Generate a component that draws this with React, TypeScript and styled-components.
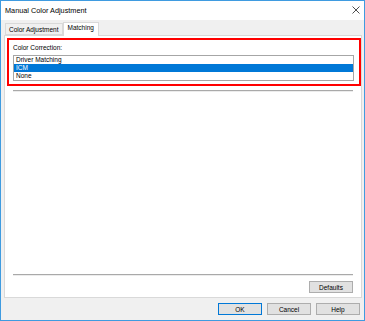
import styled, { createGlobalStyle } from "styled-components";

const GlobalStyle = createGlobalStyle`
  html, body {
    margin: 0;
    padding: 0;
    background: #ffffff;
  }
  * {
    box-sizing: border-box;
  }
`;

const Window = styled.div`
  width: 365px;
  height: 321px;
  border: 1px solid #3f9be0;
  background: #f0f0f0;
  display: flex;
  flex-direction: column;
  font-family: "Liberation Sans", Arial, sans-serif;
  font-size: 6.5px;
  color: #000;
`;

const TitleBar = styled.div`
  height: 19px;
  background: #ffffff;
  display: flex;
  align-items: center;
  justify-content: space-between;
  padding: 0 4px 1px 4px;
  font-size: 7.3px;
`;

const CloseIcon = () => (
  <svg width="8" height="8" viewBox="0 0 8 8">
    <path d="M0.5 0.5 L7.5 7.5 M7.5 0.5 L0.5 7.5" stroke="#3a3a3a" strokeWidth="0.9" fill="none" />
  </svg>
);

const Body = styled.div`
  flex: 1;
  display: flex;
  flex-direction: column;
  padding: 2px 2px 5px 3px;
`;

const TabStrip = styled.div`
  height: 13px;
  display: flex;
  align-items: flex-end;
  padding-left: 1px;
  position: relative;
  z-index: 1;
`;

const Tab = styled.div<{ $active?: boolean }>`
  height: ${(p) => (p.$active ? 14 : 12)}px;
  margin-bottom: ${(p) => (p.$active ? -1 : 0)}px;
  padding: ${(p) => (p.$active ? "1px 4px 0 4px" : "1px 3px 0 3px")};
  background: ${(p) => (p.$active ? "#ffffff" : "#f0f0f0")};
  border: 1px solid #d9d9d9;
  border-bottom: ${(p) => (p.$active ? "none" : "1px solid #d9d9d9")};
  display: flex;
  align-items: ${(p) => (p.$active ? "flex-start" : "center")};
  white-space: nowrap;
`;

const Panel = styled.div`
  flex: 1;
  background: #ffffff;
  border: 1px solid #d9d9d9;
  display: flex;
  flex-direction: column;
  padding: 1px 0 4px 2px;
`;

const Highlight = styled.div`
  margin-top: 1px;
  border: 2px solid #ff0000;
  padding: 3px 5px 3px 4px;
  display: flex;
  flex-direction: column;
`;

const Label = styled.div`
  height: 10px;
  line-height: 10px;
  margin-bottom: 2px;
`;

const ListBox = styled.div`
  height: 26px;
  border: 1px solid #a6a6a6;
  background: #ffffff;
  display: flex;
  flex-direction: column;
`;

const ListItem = styled.div<{ $selected?: boolean }>`
  height: 8px;
  line-height: 8px;
  padding-left: 2px;
  background: ${(p) => (p.$selected ? "#0078d7" : "transparent")};
  color: ${(p) => (p.$selected ? "#ffffff" : "#000000")};
`;

const Separator = styled.div<{ $top: number }>`
  margin: ${(p) => p.$top}px 8px 0 6px;
  height: 2px;
  border-top: 1px solid #a9a9a9;
  border-bottom: 1px solid #ececec;
`;

const Spacer = styled.div`
  flex: 1;
`;

const ButtonRow = styled.div<{ $top: number; $right: number }>`
  display: flex;
  justify-content: flex-end;
  gap: 5px;
  margin-top: ${(p) => p.$top}px;
  padding-right: ${(p) => p.$right}px;
`;

const Button = styled.div<{ $default?: boolean }>`
  width: 44px;
  height: 12px;
  background: #e1e1e1;
  border: 1px solid ${(p) => (p.$default ? "#0078d7" : "#adadad")};
  display: flex;
  align-items: center;
  justify-content: center;
`;

export default function App() {
  return (
    <>
      <GlobalStyle />
      <Window>
        <TitleBar>
          <span>Manual Color Adjustment</span>
          <CloseIcon />
        </TitleBar>
        <Body>
          <TabStrip>
            <Tab>Color Adjustment</Tab>
            <Tab $active>Matching</Tab>
          </TabStrip>
          <Panel>
            <Highlight>
              <Label>Color Correction:</Label>
              <ListBox>
                <ListItem>Driver Matching</ListItem>
                <ListItem $selected>ICM</ListItem>
                <ListItem>None</ListItem>
              </ListBox>
            </Highlight>
            <Separator $top={4} />
            <Spacer />
            <Separator $top={0} />
            <ButtonRow $top={5} $right={8}>
              <Button>Defaults</Button>
            </ButtonRow>
          </Panel>
          <ButtonRow $top={5} $right={2}>
            <Button $default>OK</Button>
            <Button>Cancel</Button>
            <Button>Help</Button>
          </ButtonRow>
        </Body>
      </Window>
    </>
  );
}
